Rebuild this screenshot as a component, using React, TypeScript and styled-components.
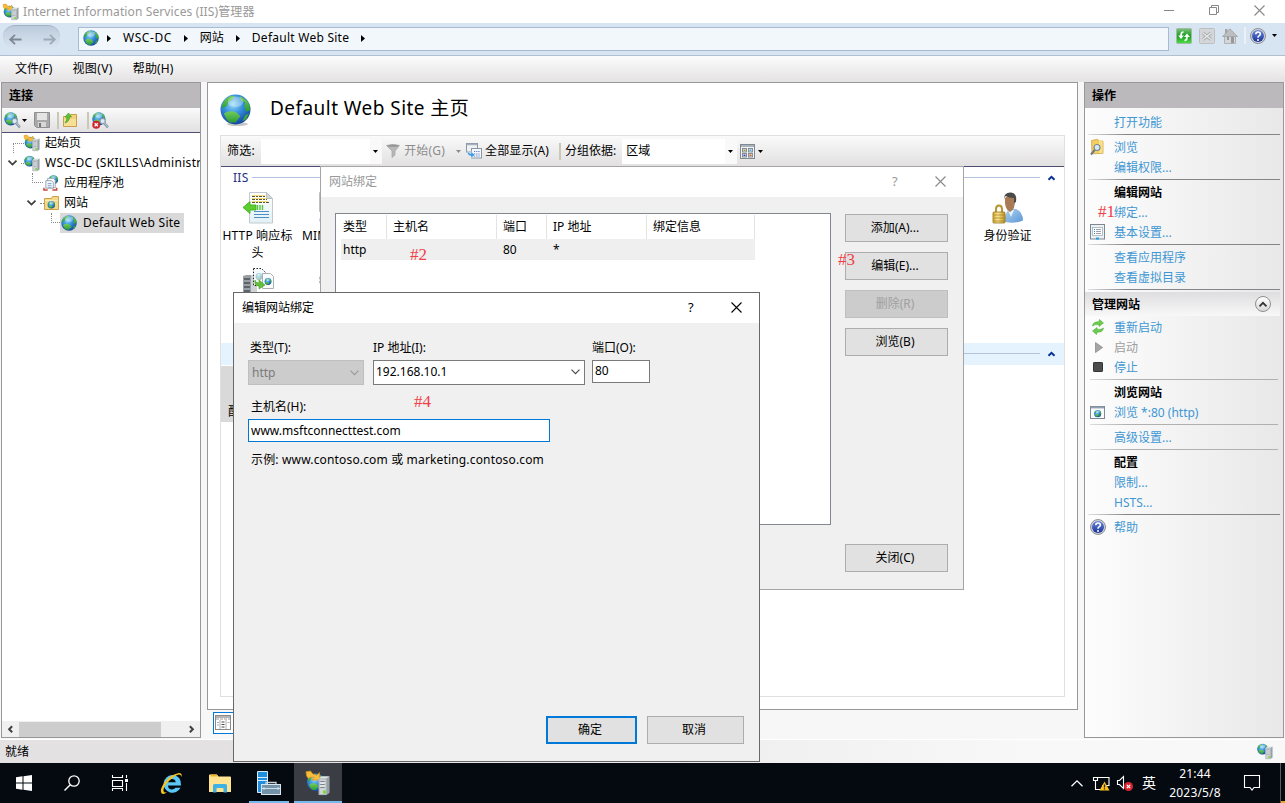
import React from 'react';
import styled, { createGlobalStyle, css } from 'styled-components';

const GlobalStyle = createGlobalStyle`
  * { box-sizing: border-box; }
  body { margin: 0; overflow: hidden; background: #000; }
  svg { display: block; flex: none; }
`;

/* ---------- icons ---------- */

const Svg = styled.svg.attrs<{ $w: number; $h?: number }>(p => ({ width: p.$w, height: p.$h ?? p.$w }))<{ $w: number; $h?: number }>`
  overflow: visible;
`;

const GlobeArt = () => (
  <>
    <circle cx="16" cy="16" r="15.500" fill="url(#sea)" />
    <path d="M2 12 Q4 5 11 2 L15 2 L13 6 L9 8 L7 12 L3 15Z" fill="url(#land)" />
    <path d="M20 2 Q28 5 30.500 11 L31 17 L27 18 L25 13 L26 9 L22 7Z" fill="url(#land)" />
    <path d="M4 20 Q10 16 17 19 L21 23 L16 29.500 L10 29.500 Q6 26 4 20Z" fill="url(#land)" />
    <path d="M26 22 L30 20 L27 26 L23 28Z" fill="#3da83a" />
    <ellipse cx="16" cy="8" rx="8" ry="5.500" fill="#fff" opacity=".3" />
  </>
);

const Globe = ({ s = 16 }: { s?: number }) => (
  <Svg $w={s} viewBox="0 0 32 32">
    {s > 20 && <ellipse cx="18" cy="31" rx="11" ry="2" fill="#000" opacity=".22" />}
    <GlobeArt />
  </Svg>
);

const TowerArt = () => (
  <>
    <path d="M17 10 L21 7 L31 7 L31 29 L27 32 L17 32Z" fill="#e2e5e7" />
    <path d="M27 10 L31 7 L31 29 L27 32Z" fill="#98a0a5" />
    <path d="M17.500 10.500h9.500v21h-9.500z" fill="#d0d4d7" stroke="#9ba2a7" strokeWidth="1" />
    <path d="M19 14h6M19 18h6M19 22h6" stroke="#7a838a" strokeWidth="1.500" />
    <path d="M19 16h6M19 20h6" stroke="#f4f6f7" strokeWidth="1.500" />
    <circle cx="24.500" cy="28" r="2.200" fill="#72dc34" />
  </>
);

const SiteServer = ({ s = 16, arrow = false }: { s?: number; arrow?: boolean }) => (
  <Svg $w={s} viewBox="0 0 32 32">
    <g transform={arrow ? 'translate(1 3) scale(.76)' : 'translate(0 1) scale(.7)'}>
      <GlobeArt />
    </g>
    {arrow && <path d="M0 1 L6 0 L9 4 Q12 4 14 6 L18 2 L18 12 L8 12 L11 8.500 Q6 7 3 10 Q0 7 0 1Z" fill="#f9bd3c" stroke="#d18c17" />}
    <TowerArt />
  </Svg>
);

const Magnifier = () => (
  <>
    <circle cx="20" cy="17" r="5" fill="#d9ebf6" stroke="#8199ac" strokeWidth="2" />
    <path d="M23 21L30 29" stroke="#7e93a4" strokeWidth="4.500" />
    <path d="M23 20.500L29.500 28" stroke="#cbdbe6" strokeWidth="1.600" />
  </>
);

const ConnectIcon = ({ error = false }: { error?: boolean }) => (
  <Svg $w={17} viewBox="0 0 32 32">
    <g transform="scale(.8)">
      <GlobeArt />
    </g>
    <Magnifier />
    {error && (
      <>
        <circle cx="8" cy="24" r="7.500" fill="#d3242c" />
        <path d="M5 21l6 6M11 21l-6 6" stroke="#fff" strokeWidth="2.500" />
      </>
    )}
  </Svg>
);

const FloppyIcon = () => (
  <Svg $w={16} viewBox="0 0 16 16">
    <path d="M.500 .500h15v15h-13l-2-2z" fill="#a9a9a9" stroke="#8f8f8f" />
    <rect x="3" y="1" width="10" height="7" fill="#e4e4e4" />
    <rect x="4" y="10" width="8" height="5" fill="#d7d7d7" />
    <rect x="5" y="11" width="2" height="4" fill="#777" />
  </Svg>
);

const FolderUpIcon = () => (
  <Svg $w={16} viewBox="0 0 16 16">
    <path d="M1.500 4.500h6l1-2h6v12h-13z" fill="#f2d276" stroke="#c9a048" />
    <path d="M2 7h12v7H2z" fill="#f8df98" />
    <path d="M3 11 Q7.500 9.500 7.500 5 L9.500 5 L6.500 1 L3 5 L5 5 Q5 8.500 3 11Z" fill="#5cc43c" stroke="#3c951f" strokeWidth=".6" />
  </Svg>
);

const AppPoolIcon = () => (
  <Svg $w={16} viewBox="0 0 17 17">
    <g transform="translate(6 0) scale(.32)">
      <GlobeArt />
    </g>
    <path d="M5 3.500h6l2 2v8H5z" fill="#fff" stroke="#7d8fa0" strokeWidth=".8" />
    <path d="M3 6h6l2 2v6H3z" fill="#f4f8fb" stroke="#7d8fa0" strokeWidth=".8" />
    <path d="M5 9h4M5 11h4M5 13h4" stroke="#6d8fc0" strokeWidth=".8" />
    <path d="M1 13.500v2.500h4M10 16h4.500v-2.500" fill="none" stroke="#c9483a" strokeWidth="1.600" />
  </Svg>
);

const SitesFolderIcon = () => (
  <Svg $w={15} $h={14} viewBox="0 0 15 14">
    <path d="M.5 2.500h7l1-2h6v13H.5z" fill="#f6d986" stroke="#cba24a" />
    <path d="M1 4.500h13" stroke="#fbeab8" />
    <g transform="translate(3.500 5) scale(.24)">
      <GlobeArt />
    </g>
  </Svg>
);

const FilterIcon = () => (
  <Svg $w={14} viewBox="0 0 14 14">
    <path d="M.5 1.500 Q7 -.5 13.500 1.500 L9 7 L9 11 L6 13.500 L6 7Z" fill="#b8b8b8" stroke="#a2a2a2" strokeWidth=".7" />
    <ellipse cx="7" cy="1.800" rx="5.500" ry="1" fill="#939393" />
  </Svg>
);

const ShowAllIcon = () => (
  <Svg $w={16} viewBox="0 0 16 16">
    <rect x=".5" y=".5" width="11" height="8.500" fill="#eef2f5" stroke="#8a98a6" />
    <path d="M1 1.500h10" stroke="#a5b1bc" strokeWidth="1.500" />
    <rect x="5.500" y="5.500" width="10" height="9.500" fill="#f5f8fb" stroke="#8a98a6" />
    <path d="M8 8.500h6M8 11h6M8 13h6" stroke="#5a78c8" strokeDasharray="1.200 1" />
    <path d="M1.500 6.500Q2 10.500 5 10.500V8.500L9 12L5 15V13Q.5 12.500 1.500 6.500z" fill="#3d9be0" stroke="#fff" strokeWidth=".4" />
  </Svg>
);

const ViewGridIcon = () => (
  <Svg $w={15} viewBox="0 0 15 15">
    <rect x=".5" y=".5" width="14" height="14" fill="#f1f3f5" stroke="#808890" />
    <path d="M1 2h13" stroke="#a9b3bd" strokeWidth="2" />
    <g fill="#dfe4e8" stroke="#7d858c" strokeWidth=".9">
      <rect x="2.500" y="4.500" width="4" height="3.500" />
      <rect x="8.500" y="4.500" width="4" height="3.500" />
      <rect x="2.500" y="9.500" width="4" height="3.500" />
      <rect x="8.500" y="9.500" width="4" height="3.500" />
    </g>
    <path d="M3.500 6.300h2" stroke="#a89a20" strokeWidth="1.500" />
    <path d="M9.500 6.300h2" stroke="#3db1e8" strokeWidth="1.500" />
    <path d="M3.500 11.300h2" stroke="#4040d0" strokeWidth="1.500" />
    <path d="M9.500 11.300h2" stroke="#e05a20" strokeWidth="1.500" />
  </Svg>
);

const HeadersIcon = () => (
  <Svg $w={32} viewBox="0 0 32 32">
    <path d="M7.500 .5h17l6 6v24.500h-23z" fill="url(#page)" stroke="#c2c9cd" />
    <path d="M24.500 .5l6 6h-6z" fill="#d4d8da" stroke="#b9c1c6" />
    <path d="M10 4.500h13M10 7.500h15M10 10.500h17" stroke="#5d5630" strokeWidth="1" strokeDasharray="3 1 2 1" />
    <path d="M10 3.500h13M10 6.500h15M10 9.500h16" stroke="#f5dd78" strokeWidth="1" />
    <path d="M12 19.500h15M12 22.500h15M12 25.500h15" stroke="#4c8fc8" strokeWidth="1.200" />
    <path d="M1 15.500 L8 9.500 V13 H14 V18 H8 V21.500Z" fill="#5ccf2e" stroke="#3aa81c" strokeWidth=".8" />
    <path d="M15.500 13v5M18 13v5M20.500 13v5" stroke="#59c53a" strokeWidth="1.400" />
  </Svg>
);

const MimeIcon = () => (
  <Svg $w={32} viewBox="0 0 32 32">
    <path d="M2.500 .5h17l6 6v13h-23z" fill="#fafafa" stroke="#b9c1c6" />
    <circle cx="6" cy="28" r="3.500" fill="#7d9fd0" />
  </Svg>
);

const RedirectIcon = () => (
  <Svg $w={32} viewBox="0 0 32 32">
    <path d="M1 8 L4 7 L10 7 L10 32 L1 32Z" fill="#9aa1a6" />
    <path d="M9 7h6v25h-6z" fill="#d0d3d5" />
    <path d="M2 11h6M2 15h6M2 19h6M2 23h6" stroke="#4a5258" strokeWidth="1.500" />
    <path d="M11.500 .5h8l4 4v13h-12z" fill="#f5f9fb" stroke="#222" strokeDasharray="1.500 1.500" />
    <g transform="translate(13.500 5) scale(.22)" opacity=".4">
      <GlobeArt />
    </g>
    <path d="M20.500 5.500h8l3 3v12h-11z" fill="#f9fbfc" stroke="#a9b1b6" />
    <g transform="translate(22.500 10) scale(.22)">
      <GlobeArt />
    </g>
    <path d="M13 12 Q13 15 17 15 V12 L23 17 L17 21 V18 Q12 18 13 12Z" fill="#62c03a" stroke="#3f9a20" strokeWidth=".6" />
  </Svg>
);

const GearIcon = () => (
  <Svg $w={32} viewBox="0 0 32 32">
    <circle cx="11" cy="12" r="7" fill="none" stroke="#a3a8ab" strokeWidth="4" strokeDasharray="3 1.500" />
  </Svg>
);

const AuthIcon = () => (
  <Svg $w={32} viewBox="0 0 32 32">
    <path d="M13 30 Q12 19 19 17 L24 17 Q31 20 31 28.500 Q23 32 13 30Z" fill="url(#shirt)" />
    <path d="M16 18 L19 25 L22 18Z" fill="#e8f2fb" />
    <path d="M13 6 Q12 17 18 20 Q23.500 18 23 6 Q18 1 13 6Z" fill="#a87a56" />
    <path d="M12 7 Q12 0 19 .5 Q25.500 1 24 10 L22 11 L22 6 Q17 6 13.500 4Z" fill="#4a4a48" />
    <path d="M4 21 V17 Q4 13.500 7 13.500 Q10 13.500 10 17 V21" fill="none" stroke="#b9962e" strokeWidth="2" />
    <rect x="1" y="20" width="12" height="11" rx="1" fill="url(#gold)" stroke="#94701a" strokeWidth=".8" />
    <path d="M2 23h10M2 26h10M2 29h10" stroke="#a17c1c" strokeWidth=".7" />
  </Svg>
);

const RefreshGreenIcon = () => (
  <Svg $w={16} viewBox="0 0 16 16">
    <rect x=".5" y=".5" width="15" height="15" rx="1" fill="url(#green)" stroke="#a3b8a5" />
    <path d="M7.500 4 Q5 4 5 8" fill="none" stroke="#fff" strokeWidth="1.700" />
    <path d="M2 7.500H8L5 11z" fill="#fff" />
    <path d="M8.500 12.500 Q11 12.500 11 8.500" fill="none" stroke="#fff" strokeWidth="1.700" />
    <path d="M8 9H14L11 5.500z" fill="#fff" />
  </Svg>
);

const StopGreyIcon = () => (
  <Svg $w={16} viewBox="0 0 16 16">
    <rect x=".5" y=".5" width="15" height="15" rx="1" fill="#d4d6d8" stroke="#bcbfc2" />
    <path d="M4 5l8 6.500M12 5l-8 6.500" stroke="#a4a8ac" strokeWidth="3" />
    <path d="M4 5l8 6.500M12 5l-8 6.500" stroke="#e8eaec" strokeWidth="1.400" />
  </Svg>
);

const HomeGreyIcon = () => (
  <Svg $w={16} viewBox="0 0 16 16">
    <path d="M2.500 8h11v7.500h-11z" fill="#d4d6d8" stroke="#a5a7a9" strokeWidth=".8" />
    <path d="M.5 8.500L8 .8l7.500 7.700z" fill="#bcbfc1" stroke="#a0a2a4" strokeWidth=".8" />
    <path d="M3 1h2.500v3L3 6z" fill="#a5a5a5" />
    <rect x="5" y="9" width="2" height="3" fill="#999" />
    <rect x="9" y="9" width="3" height="6" fill="#96989a" />
  </Svg>
);

const HelpIcon = () => (
  <Svg $w={16} viewBox="0 0 16 16">
    <circle cx="8" cy="8" r="7.500" fill="#cfd1d6" stroke="#85888e" strokeWidth=".9" />
    <circle cx="8" cy="8" r="6" fill="url(#help)" />
    <path d="M5.800 6.300 Q5.800 4 8 4 Q10.300 4 10.300 6 Q10.300 7.200 9 7.900 Q8 8.500 8 9.800" fill="none" stroke="#fff" strokeWidth="1.600" />
    <circle cx="8" cy="12" r="1" fill="#fff" />
  </Svg>
);

const ExploreIcon = () => (
  <Svg $w={15} $h={16} viewBox="0 0 15 16">
    <path d="M1.500 1.500l6-1.200 1 1.500 4.500 .5v12l-11 .5z" fill="#f3cf62" stroke="#d0a644" strokeWidth=".8" />
    <path d="M9 1h3.500v13H9z" fill="#f9e18c" />
    <circle cx="7" cy="8.500" r="3" fill="#d5ebf7" stroke="#7c8790" strokeWidth="1.200" />
    <path d="M4.800 10.800L1 15.500" stroke="#6a7a86" strokeWidth="2" />
  </Svg>
);

const SettingsPageIcon = () => (
  <Svg $w={15} $h={16} viewBox="0 0 15 16">
    <rect x=".5" y=".5" width="14" height="14.500" fill="#eef1f3" stroke="#7e8890" />
    <rect x="2.500" y="3.500" width="10" height="8" fill="#fff" stroke="#a4b0ba" strokeWidth=".8" />
    <path d="M4 5.500h1M4 7.500h1M4 9.500h1" stroke="#3d7ec0" />
    <path d="M6 5.500h5M6 7.500h5M6 9.500h5" stroke="#808c98" strokeWidth=".8" />
    <path d="M6 14.500h3" stroke="#1aa3e8" strokeWidth="2" />
  </Svg>
);

const RestartIcon = () => (
  <Svg $w={14} $h={16} viewBox="0 0 14 16">
    <path d="M1.500 7 Q2 2.500 8 2.800 L8.500 .5 L12.500 4 L8 7.500 V5.800 Q4 5 1.500 7Z" fill="#6ccb4e" stroke="#43a32a" strokeWidth=".5" />
    <path d="M12.500 9 Q12 13.500 6 13.200 L5.500 15.500 L1.500 12 L6 8.500 V10.200 Q10 11 12.500 9Z" fill="#6ccb4e" stroke="#43a32a" strokeWidth=".5" />
  </Svg>
);

const StartIcon = () => (
  <Svg $w={8} $h={11} viewBox="0 0 8 11">
    <path d="M.5 .5L7.500 5.500L.5 10.500z" fill="#a5a5a5" stroke="#8d8d8d" strokeWidth=".8" />
  </Svg>
);

const StopIcon = () => (
  <Svg $w={10} viewBox="0 0 10 10">
    <rect x=".5" y=".5" width="9" height="9" rx=".6" fill="#4d4d4d" stroke="#333" />
  </Svg>
);

const BrowserIcon = () => (
  <Svg $w={15} $h={13} viewBox="0 0 15 13">
    <rect x=".5" y=".5" width="14" height="12" fill="#fbfcfd" stroke="#7e8a95" />
    <path d="M1 1.500h13" stroke="#8fa0b0" strokeWidth="1.800" />
    <g transform="translate(4 4) scale(.23)">
      <GlobeArt />
    </g>
  </Svg>
);

const FeaturesViewIcon = () => (
  <Svg $w={16} $h={15} viewBox="0 0 16 15">
    <rect x=".5" y=".5" width="15" height="14" fill="#fff" stroke="#8a8a8a" />
    <path d="M1 2h14" stroke="#b5b5b5" strokeWidth="2" />
    <path d="M1 4h14" stroke="#999" strokeDasharray="3 1" />
    <path d="M5 5v9M11 5v9" stroke="#999" strokeWidth=".8" />
    <path d="M6.500 7h3M6.500 9.500h3M6.500 12h3" stroke="#444" />
    <path d="M2 7.500h2M2 10h2M12.500 7.500h2" stroke="#9fb0c0" />
  </Svg>
);

const SmallCaret = ({ c = '#000' }: { c?: string }) => (
  <Svg $w={5} $h={3} viewBox="0 0 5 3">
    <path d="M0 0h5L2.500 3z" fill={c} />
  </Svg>
);
const RightCaret = () => (
  <Svg $w={4} $h={7} viewBox="0 0 4 7">
    <path d="M0 0L4 3.500L0 7z" fill="#000" />
  </Svg>
);
const Chevron = ({ w = 8, c = '#404040', sw = 1.8, up = false }: { w?: number; c?: string; sw?: number; up?: boolean }) => (
  <Svg $w={w} $h={w / 2 + 1} viewBox={`0 0 ${w} ${w / 2 + 1}`}>
    <path d={up ? `M.5 ${w / 2 + 0.3}L${w / 2} .8L${w - 0.5} ${w / 2 + 0.3}` : `M.5 .6L${w / 2} ${w / 2 + 0.1}L${w - 0.5} .6`} fill="none" stroke={c} strokeWidth={sw} />
  </Svg>
);
const CloseGlyph = ({ c }: { c: string }) => (
  <Svg $w={11} viewBox="0 0 11 11">
    <path d="M.5 .5l10 10M10.500 .5l-10 10" stroke={c} strokeWidth="1.100" />
  </Svg>
);

const Defs = () => (
  <HiddenSvg aria-hidden>
    <defs>
      <radialGradient id="sea" cx=".42" cy=".32" r=".72">
        <stop offset="0" stopColor="#9adcf8" />
        <stop offset=".45" stopColor="#3590dd" />
        <stop offset="1" stopColor="#123d9c" />
      </radialGradient>
      <linearGradient id="land" x1="0" y1="0" x2="0" y2="1">
        <stop offset="0" stopColor="#74cc5e" />
        <stop offset="1" stopColor="#2a9c34" />
      </linearGradient>
      <linearGradient id="page" x1="0" y1="0" x2="0" y2="1">
        <stop offset="0" stopColor="#fff" />
        <stop offset="1" stopColor="#e2f1f6" />
      </linearGradient>
      <linearGradient id="shirt" x1="0" y1="0" x2="1" y2="1">
        <stop offset="0" stopColor="#aad2f2" />
        <stop offset="1" stopColor="#5e97d4" />
      </linearGradient>
      <linearGradient id="gold">
        <stop offset="0" stopColor="#d6a92d" />
        <stop offset=".4" stopColor="#fbe897" />
        <stop offset="1" stopColor="#c1921d" />
      </linearGradient>
      <linearGradient id="green" x1="0" y1="0" x2="0" y2="1">
        <stop offset="0" stopColor="#7cc47c" />
        <stop offset=".5" stopColor="#169c1c" />
        <stop offset="1" stopColor="#4fe048" />
      </linearGradient>
      <linearGradient id="help" x1="0" y1="0" x2="0" y2="1">
        <stop offset="0" stopColor="#6a8ade" />
        <stop offset="1" stopColor="#183198" />
      </linearGradient>
    </defs>
  </HiddenSvg>
);

const HiddenSvg = styled.svg`
  position: absolute;
  width: 0;
  height: 0;
`;

/* ---------- frame ---------- */

const Screen = styled.div`
  position: relative;
  width: 1285px;
  height: 803px;
  display: flex;
  flex-direction: column;
  overflow: hidden;
  background: #f7f7f7;
  color: #000;
  font: 12px/20px 'Noto Sans', 'Noto Sans CJK SC', sans-serif;
  white-space: nowrap;
`;

const Txt = styled.span<{ $ls?: number; $c?: string }>`
  display: block;
  letter-spacing: ${p => p.$ls ?? 0}px;
  color: ${p => p.$c ?? 'inherit'};
`;

const TitleBar = styled.header`
  height: 23px;
  flex: none;
  display: flex;
  align-items: center;
  padding: 0 20px 0 3px;
  background: #fff;
  color: #999;
`;
const TitleText = styled(Txt)`
  flex: 1;
  margin-left: 4px;
`;
const WindowButtons = styled.div`
  display: flex;
  align-items: center;
  gap: 35px;
  margin-top: -3px;
`;

const AddressBar = styled.div`
  height: 33px;
  flex: none;
  display: flex;
  align-items: flex-start;
  padding: 4px 8px 0 3px;
  background: #d7e4f2;
  border-bottom: 1px solid #b1bfd0;
`;
const NavPill = styled.div`
  width: 57px;
  height: 25px;
  flex: none;
  margin: -2px 18px 0 0;
  display: flex;
  align-items: center;
  justify-content: space-between;
  padding: 3px 4px 0 6px;
  border-radius: 12px;
  background: linear-gradient(#bccbdc, #dae6f2);
  border-top: 1px solid #a4b1c0;
`;
const AddressField = styled.div`
  width: 1091px;
  height: 24px;
  flex: none;
  display: flex;
  align-items: center;
  padding: 0 0 2px 4px;
  background: #f2f7fc;
  border: 1px solid #a9bbd2;
`;
const Crumb = styled(Txt)`
  margin: 0 12px;
`;
const AddressTools = styled.div`
  display: flex;
  align-items: center;
  height: 17px;
  margin-left: 7px;
  gap: 7px;
  & > :nth-child(4) {
    margin: 0 -3px 0 -1px;
  }
  & > :last-child {
    margin-left: -1px;
  }
`;
const ToolDivider = styled.i<{ $c?: string }>`
  width: 2px;
  height: 17px;
  background: ${p => p.$c ?? '#c9c8b4'};
`;

const MenuBar = styled.nav`
  height: 26px;
  flex: none;
  display: flex;
  align-items: center;
  gap: 20px;
  padding-left: 15px;
  background: linear-gradient(#fcfcfc, #e4e2e3);
`;

const Workspace = styled.main`
  height: 657px;
  flex: none;
  display: flex;
  align-items: flex-start;
  padding: 0 0 0 1px;
`;

const panel = css`
  border: 1px solid #989799;
  background: #fff;
  display: flex;
  flex-direction: column;
`;
const PanelTitle = styled.h2`
  margin: 0;
  height: 25px;
  flex: none;
  padding-left: 7px;
  background: #bbb9bc;
  font: bold 12px/24px 'Noto Sans CJK SC', sans-serif;
`;

/* ---------- connections ---------- */

const ConnectionsPanel = styled.aside`
  ${panel}
  width: 200px;
  height: 656px;
  overflow: hidden;
`;
const ConnectionsTools = styled.div`
  height: 25px;
  flex: none;
  display: flex;
  align-items: center;
  padding-left: 2px;
  background: linear-gradient(#fafafa, #e2e0e1);
  border-bottom: 1px solid #4e4e74;
`;
const Gap = styled.i<{ $w: number }>`
  width: ${p => p.$w}px;
  flex: none;
`;
const Tree = styled.div`
  flex: 1;
  overflow: hidden;
`;
const TreeRow = styled.div<{ $indent: number }>`
  height: 20px;
  display: flex;
  align-items: center;
  padding-left: ${p => p.$indent}px;
`;
const Elbow = styled.i<{ $w: number; $h: number }>`
  width: ${p => p.$w}px;
  height: ${p => p.$h}px;
  flex: none;
  align-self: ${p => (p.$h > 1 ? 'flex-end' : 'center')};
  border: 0 dotted #8a8a8a;
  border-left-width: ${p => (p.$h > 1 ? 1 : 0)}px;
  border-top-width: 1px;
`;
const CornerElbow = styled.i<{ $w: number }>`
  width: ${p => p.$w}px;
  height: 10px;
  flex: none;
  align-self: flex-start;
  border: 0 dotted #8a8a8a;
  border-left-width: 1px;
  border-bottom-width: 1px;
`;
const TreeLabel = styled(Txt)`
  padding-left: 5px;
`;
const SelectedNode = styled.div`
  height: 20px;
  width: 124px;
  display: flex;
  align-items: center;
  padding-left: 1px;
  background: #d9d9d9;
`;
const HScroll = styled.div`
  height: 16px;
  flex: none;
  display: flex;
  align-items: center;
  padding: 0 5px;
  background: #f0f0f0;
`;
const Thumb = styled.i`
  width: 142px;
  height: 15px;
  margin: 0 27px 0 5px;
  background: #cdcdcd;
`;
const Turn = styled.span<{ $deg: number }>`
  transform: rotate(${p => p.$deg}deg);
`;

/* ---------- center ---------- */

const CenterPanel = styled.section`
  ${panel}
  width: 871px;
  height: 628px;
  padding: 11px 12px 12px;
`;
const CenterColumn = styled.div`
  width: 871px;
  margin: 0 6px;
`;
const PageHead = styled.div`
  height: 41px;
  flex: none;
  display: flex;
  align-items: flex-start;
  h1 {
    margin: 1px 0 0 19px;
    font: 19px/26px 'Noto Sans', 'Noto Sans CJK SC', sans-serif;
    letter-spacing: 0.45px;
  }
`;
const FeatureBox = styled.div`
  width: 845px;
  flex: 1;
  border: 1px solid #e0e0e0;
`;
const FilterBar = styled.div`
  height: 31px;
  display: flex;
  align-items: center;
  padding-left: 6px;
  background: linear-gradient(#fafafa, #e2e0e1);
  border-bottom: 1px solid #4e4e74;
`;
const Combo = styled.div<{ $w: number }>`
  width: ${p => p.$w}px;
  height: 25px;
  display: flex;
  align-items: center;
  justify-content: space-between;
  padding: 0 4px;
  background: linear-gradient(90deg, #fff calc(100% - 12px), #f9f9f9 0);
`;
const GroupHead = styled.div<{ $hot?: boolean }>`
  height: 22px;
  display: flex;
  align-items: center;
  gap: 3px;
  padding: 0 9px 0 12px;
  color: #1f2f84;
  background: ${p => (p.$hot ? '#e5f3ff' : 'transparent')};
`;
const GroupLine = styled.i`
  flex: 1;
  height: 1px;
  margin: -1px 5px 0 0;
  background: #b3c3de;
`;
const FeatureGrid = styled.div`
  display: grid;
  grid-template-columns: repeat(11, 75px);
  grid-auto-rows: 76px;
  padding-top: 3px;
  margin-left: -1px;
  height: 154px;
  overflow: hidden;
`;
const Feature = styled.div<{ $col: number }>`
  grid-column: ${p => p.$col};
  display: flex;
  flex-direction: column;
  align-items: center;
  gap: 3px;
  line-height: 17px;
  text-align: center;
`;
const ManagementItem = styled.div`
  width: 75px;
  height: 56px;
  margin-top: 1px;
  padding: 36px 0 0 7px;
  background: #d9d9d9;
`;
const ViewTabs = styled.div`
  padding: 2px 0 0 6px;
`;
const ViewTab = styled.div`
  width: 82px;
  height: 22px;
  padding: 2px 1px;
  border: 1px solid #0078d7;
  background: #fff;
`;

/* ---------- actions ---------- */

const ActionsPanel = styled.aside`
  ${panel}
  width: 200px;
  height: 656px;
  background: linear-gradient(90deg, #fdfdfd, #e9e8e9);
`;
const ActionList = styled.div`
  padding-top: 4px;
`;
const ActionRow = styled.div<{ $kind?: 'head' | 'off' }>`
  height: 20px;
  display: grid;
  grid-template: 20px / 24px 1fr;
  align-items: center;
  padding-left: 5px;
  color: ${p => (p.$kind === 'head' ? '#000' : p.$kind === 'off' ? '#9d9d9d' : '#3f97d3')};
  font-weight: ${p => (p.$kind === 'head' ? 700 : 400)};
  & > :last-child {
    padding-top: 2px;
  }
`;
const IconSlot = styled.span<{ $pad?: number }>`
  padding-left: ${p => p.$pad ?? 0}px;
`;
const ActionRule = styled.hr<{ $soft?: boolean }>`
  height: 1px;
  margin: 2px ${p => (p.$soft ? 5 : 3)}px 2px ${p => (p.$soft ? 5 : 3)}px;
  border: 0;
  background: ${p => (p.$soft ? 'linear-gradient(90deg,#ddd,#b0b0b0 20%)' : 'linear-gradient(90deg,#e0e0e0,#858585 20%)')};
`;
const ActionSection = styled.div`
  height: 24px;
  display: flex;
  align-items: center;
  justify-content: space-between;
  margin: 0 3px 1px 0;
  padding: 1px 9px 0 7px;
  font-weight: 700;
  background: linear-gradient(#dedddf, #f8f8f8);
`;
const CollapseButton = styled.span`
  width: 16px;
  height: 16px;
  margin-top: -1px;
  display: grid;
  place-items: center;
  border: 1px solid #8f8f8f;
  border-radius: 50%;
  background: linear-gradient(#fff, #d8d8d8);
`;

const StatusBar = styled.footer`
  height: 24px;
  flex: none;
  display: flex;
  align-items: center;
  justify-content: space-between;
  padding: 0 12px 0 5px;
  border-top: 1px solid #fff;
  background: linear-gradient(90deg, #e3e1e2 20%, #f8f8f8 80%);
  svg {
    margin-top: -2px;
  }
`;

/* ---------- dialogs ---------- */

const Dialog = styled.section<{ $x: number; $y: number; $w: number; $h: number; $edge: string }>`
  position: absolute;
  left: ${p => p.$x}px;
  top: ${p => p.$y}px;
  width: ${p => p.$w}px;
  height: ${p => p.$h}px;
  display: flex;
  flex-direction: column;
  border: 1px solid ${p => p.$edge};
  background: #f0f0f0;
`;
const DialogTitle = styled.header<{ $dim?: boolean }>`
  height: 30px;
  flex: none;
  display: flex;
  align-items: center;
  padding: 0 17px 1px 8px;
  background: #fff;
  color: ${p => (p.$dim ? '#999' : '#000')};
  & > :first-child {
    flex: 1;
    padding-top: 1px;
  }
`;
const HelpMark = styled.span`
  width: 8px;
  margin: -1px 35px 0 0;
  font-size: 13px;
`;
const Push = styled.button<{ $w?: number; $state?: 'default' | 'off' }>`
  width: ${p => p.$w ?? 103}px;
  height: 28px;
  padding: 0 3px 0 0;
  border: ${p => (p.$state === 'default' ? '2px solid #0078d7' : p.$state === 'off' ? '1px solid #bfbfbf' : '1px solid #adadad')};
  background: ${p => (p.$state === 'off' ? '#ccc' : '#e1e1e1')};
  color: ${p => (p.$state === 'off' ? '#9f9f9f' : '#000')};
  font: inherit;
`;
const BindingsBody = styled.div`
  flex: 1;
  display: flex;
  gap: 14px;
  padding: 16px 15px 0 14px;
`;
const BindingsList = styled.div`
  width: 496px;
  height: 312px;
  padding: 1px 0 0 5px;
  border: 1px solid #828790;
  background: #fff;
`;
const BindingsRow = styled.div<{ $head?: boolean }>`
  width: 414px;
  height: ${p => (p.$head ? 24 : 21)}px;
  display: grid;
  grid-template-columns: 46px 110px 50px 100px 108px;
  line-height: ${p => (p.$head ? 23 : 22)}px;
  background: ${p => (p.$head ? '#fff' : '#efefef')};
  span {
    padding-left: 6px;
    border-right: 1px solid ${p => (p.$head ? '#e3e3e3' : 'transparent')};
  }
  span:first-child {
    padding-left: 2px;
  }
`;
const ButtonStack = styled.div`
  height: 358px;
  display: flex;
  flex-direction: column;
  gap: 10px;
  margin-top: 1px;
  & > :last-child {
    margin-top: auto;
  }
`;

const EditBody = styled.div`
  flex: 1;
  display: flex;
  flex-direction: column;
  padding: 15px 15px 17px 14px;
`;
const FieldRow = styled.div`
  display: flex;
  align-items: flex-start;
`;
const Field = styled.label<{ $w: number; $gap?: number }>`
  display: block;
  width: ${p => p.$w}px;
  margin-right: ${p => p.$gap ?? 0}px;
`;
const FieldLabel = styled.div<{ $pad?: number }>`
  height: 22px;
  padding-left: ${p => p.$pad ?? 2}px;
`;
const Box = styled.div<{ $h: number; $c: string; $off?: boolean; $low?: boolean }>`
  height: ${p => p.$h}px;
  display: flex;
  align-items: center;
  justify-content: space-between;
  padding: ${p => (p.$low ? '1px 4px 0 3px' : '0 4px 1px 2px')};
  border: 1px solid ${p => p.$c};
  background: ${p => (p.$off ? '#ccc' : '#fff')};
  color: ${p => (p.$off ? '#7b7b7b' : '#000')};
`;
const HostBox = styled(Box)`
  padding: 1px 4px 0 2px;
`;
const HostRow = styled.div`
  margin-top: 12px;
`;
const Example = styled(Txt)`
  padding: 8px 0 0 3px;
`;
const DialogActions = styled.div`
  display: flex;
  justify-content: flex-end;
  gap: 10px;
  margin-top: auto;
`;

const Note = styled.b<{ $x: number; $y: number }>`
  position: absolute;
  left: ${p => p.$x}px;
  top: ${p => p.$y}px;
  color: #ef4048;
  font: 17px/18px 'Liberation Serif', serif;
`;

/* ---------- taskbar ---------- */

const Taskbar = styled.footer`
  height: 40px;
  flex: none;
  display: flex;
  align-items: stretch;
  background: #050a11;
  color: #fff;
`;
const Task = styled.div<{ $w: number; $open?: boolean; $active?: boolean; $mr?: number }>`
  width: ${p => p.$w}px;
  margin-right: ${p => p.$mr ?? 0}px;
  display: grid;
  place-items: center;
  padding-top: ${p => (p.$open ? 2 : 0)}px;
  background: ${p => (p.$active ? '#3a3e44' : 'transparent')};
  border-bottom: ${p => (p.$open ? 2 : 0)}px solid #76b9ed;
`;
const Tray = styled.div`
  margin-left: auto;
  display: flex;
  align-items: center;
`;
const Clock = styled.div`
  width: 54px;
  margin: 0 22px 0 12px;
  line-height: 19px;
  text-align: center;
  letter-spacing: 0.15px;
`;
const Ime = styled.span`
  font-size: 14px;
  margin-left: 8px;
`;
const DesktopEdge = styled.i`
  width: 5px;
  height: 40px;
  margin-left: 20px;
  border-left: 1px solid #5b5e62;
  background: linear-gradient(#050a11 38px, #f2a02c 38px);
`;

type ActionItem = { t: string; icon?: React.ReactNode; pad?: number; kind?: 'head' | 'off' };
const siteActions: (ActionItem | 'rule')[] = [
  { t: '打开功能' },
  'rule',
  { t: '浏览', icon: <ExploreIcon /> },
  { t: '编辑权限...' },
  'rule',
  { t: '编辑网站', kind: 'head' },
  { t: '绑定...' },
  { t: '基本设置...', icon: <SettingsPageIcon /> },
  'rule',
  { t: '查看应用程序' },
  { t: '查看虚拟目录' },
  'rule',
];
const manageActions: (ActionItem | 'rule' | 'soft')[] = [
  { t: '重新启动', icon: <RestartIcon />, pad: 1 },
  { t: '启动', icon: <StartIcon />, pad: 5, kind: 'off' },
  { t: '停止', icon: <StopIcon />, pad: 3 },
  'soft',
  { t: '浏览网站', kind: 'head' },
  { t: '浏览 *:80 (http)', icon: <BrowserIcon /> },
  'soft',
  { t: '高级设置...' },
  'soft',
  { t: '配置', kind: 'head' },
  { t: '限制...' },
  { t: 'HSTS...' },
  'rule',
  { t: '帮助', icon: <HelpIcon /> },
];

const Actions = ({ items }: { items: (ActionItem | 'rule' | 'soft')[] }) => (
  <>
    {items.map((it, i) =>
      typeof it === 'string' ? (
        <ActionRule key={i} $soft={it === 'soft'} />
      ) : (
        <ActionRow key={i} $kind={it.kind}>
          <IconSlot $pad={it.pad}>{it.icon}</IconSlot>
          <Txt>{it.t}</Txt>
        </ActionRow>
      ),
    )}
  </>
);

export default function App() {
  return (
    <>
      <GlobalStyle />
      <Screen>
        <Defs />
        <TitleBar>
          <SiteServer arrow />
          <TitleText $ls={0.12}>Internet Information Services (IIS)管理器</TitleText>
          <WindowButtons>
            <Svg $w={10} $h={11} viewBox="0 0 10 11">
              <path d="M0 5.500h10" stroke="#888" />
            </Svg>
            <Svg $w={10} viewBox="0 0 10 10">
              <path d="M.5 2.500h7v7h-7zM2.500 2.500v-2h7v7h-2" fill="none" stroke="#888" />
            </Svg>
            <CloseGlyph c="#888" />
          </WindowButtons>
        </TitleBar>

        <AddressBar>
          <NavPill>
            <Svg $w={13} $h={11} viewBox="0 0 13 11">
              <path d="M6 .8L1.200 5.500L6 10.200M1.500 5.500H12.500" fill="none" stroke="#7f8993" strokeWidth="1.800" />
            </Svg>
            <Svg $w={13} $h={11} viewBox="0 0 13 11">
              <path d="M7 .8L11.800 5.500L7 10.200M11.500 5.500H.5" fill="none" stroke="#9daab7" strokeWidth="1.800" />
            </Svg>
          </NavPill>
          <AddressField>
            <Globe />
            <Gap $w={8} />
            <RightCaret />
            <Crumb $ls={0.55}>WSC-DC</Crumb>
            <RightCaret />
            <Crumb>网站</Crumb>
            <RightCaret />
            <Crumb $ls={0.25}>Default Web Site</Crumb>
            <RightCaret />
          </AddressField>
          <AddressTools>
            <RefreshGreenIcon />
            <StopGreyIcon />
            <HomeGreyIcon />
            <ToolDivider $c="#edf1f5" />
            <HelpIcon />
            <SmallCaret />
          </AddressTools>
        </AddressBar>

        <MenuBar>
          <Txt>文件(F)</Txt>
          <Txt $ls={0.4}>视图(V)</Txt>
          <Txt $ls={0.1}>帮助(H)</Txt>
        </MenuBar>

        <Workspace>
          <ConnectionsPanel>
            <PanelTitle>连接</PanelTitle>
            <ConnectionsTools>
              <ConnectIcon />
              <Gap $w={1} />
              <SmallCaret />
              <Gap $w={7} />
              <FloppyIcon />
              <Gap $w={7} />
              <ToolDivider />
              <Gap $w={3} />
              <FolderUpIcon />
              <Gap $w={9} />
              <ToolDivider />
              <Gap $w={3} />
              <ConnectIcon error />
            </ConnectionsTools>
            <Tree>
              <TreeRow $indent={11}>
                <Elbow $w={11} $h={10} />
                <SiteServer arrow />
                <TreeLabel>起始页</TreeLabel>
              </TreeRow>
              <TreeRow $indent={6}>
                <Chevron w={9} />
                <Gap $w={4} />
                <Elbow $w={3} $h={1} />
                <SiteServer />
                <TreeLabel $ls={0.32}>WSC-DC (SKILLS\Administrator)</TreeLabel>
              </TreeRow>
              <TreeRow $indent={30}>
                <CornerElbow $w={11} />
                <AppPoolIcon />
                <TreeLabel>应用程序池</TreeLabel>
              </TreeRow>
              <TreeRow $indent={25}>
                <Chevron w={9} />
                <Gap $w={4} />
                <Elbow $w={4} $h={1} />
                <SitesFolderIcon />
                <TreeLabel>网站</TreeLabel>
              </TreeRow>
              <TreeRow $indent={49}>
                <CornerElbow $w={9} />
                <SelectedNode>
                  <Globe />
                  <Gap $w={1} />
                  <TreeLabel $ls={0.25}>Default Web Site</TreeLabel>
                </SelectedNode>
              </TreeRow>
            </Tree>
            <HScroll>
              <Turn $deg={90}>
                <Chevron w={7} sw={2} />
              </Turn>
              <Thumb />
              <Turn $deg={-90}>
                <Chevron w={7} sw={2} />
              </Turn>
            </HScroll>
          </ConnectionsPanel>

          <CenterColumn>
            <CenterPanel>
              <PageHead>
                <Globe s={31} />
                <h1>Default Web Site 主页</h1>
              </PageHead>
              <FeatureBox>
                <FilterBar>
                  <Txt $ls={0.3}>筛选:</Txt>
                  <Gap $w={6} />
                  <Combo $w={121}>
                    <span />
                    <SmallCaret />
                  </Combo>
                  <Gap $w={4} />
                  <FilterIcon />
                  <Gap $w={4} />
                  <Txt $ls={0.2} $c="#8c8c8c">开始(G)</Txt>
                  <Gap $w={11} />
                  <SmallCaret c="#8c8c8c" />
                  <Gap $w={5} />
                  <ShowAllIcon />
                  <Gap $w={3} />
                  <Txt $ls={0.15}>全部显示(A)</Txt>
                  <Gap $w={10} />
                  <ToolDivider />
                  <Gap $w={4} />
                  <Txt>分组依据:</Txt>
                  <Gap $w={6} />
                  <Combo $w={115}>
                    <Txt>区域</Txt>
                    <SmallCaret />
                  </Combo>
                  <Gap $w={3} />
                  <ViewGridIcon />
                  <Gap $w={3} />
                  <SmallCaret />
                </FilterBar>
                <GroupHead>
                  <Txt $ls={0.3}>IIS</Txt>
                  <GroupLine />
                  <Chevron w={7} c="#0a2f96" sw={2} up />
                </GroupHead>
                <FeatureGrid>
                  <Feature $col={1}>
                    <HeadersIcon />
                    <Txt $ls={0.15}>
                      HTTP 响应标
                      <br />头
                    </Txt>
                  </Feature>
                  <Feature $col={2}>
                    <MimeIcon />
                    <Txt $ls={0.2}>MIME 类型</Txt>
                  </Feature>
                  <Feature $col={11}>
                    <AuthIcon />
                    <Txt>身份验证</Txt>
                  </Feature>
                  <Feature $col={1}>
                    <RedirectIcon />
                  </Feature>
                  <Feature $col={2}>
                    <GearIcon />
                  </Feature>
                </FeatureGrid>
                <GroupHead $hot>
                  <Txt>管理</Txt>
                  <GroupLine />
                  <Chevron w={7} c="#0a2f96" sw={2} up />
                </GroupHead>
                <ManagementItem>配置编辑</ManagementItem>
              </FeatureBox>
            </CenterPanel>
            <ViewTabs>
              <ViewTab>
                <FeaturesViewIcon />
              </ViewTab>
            </ViewTabs>
          </CenterColumn>

          <ActionsPanel>
            <PanelTitle>操作</PanelTitle>
            <ActionList>
              <Actions items={siteActions} />
              <ActionSection>
                管理网站
                <CollapseButton>
                  <Chevron w={8} c="#333" up />
                </CollapseButton>
              </ActionSection>
              <Actions items={manageActions} />
            </ActionList>
          </ActionsPanel>
        </Workspace>

        <StatusBar>
          <Txt>就绪</Txt>
          <SiteServer />
        </StatusBar>

        <Taskbar>
          <Task $w={48}>
            <Svg $w={16} viewBox="0 0 16 16">
              <path d="M0 2.300L6.500 1.300V7.500H0zM7.500 1.200L16 0V7.500H7.500zM0 8.500H6.500V14.700L0 13.700zM7.500 8.500H16V16L7.500 14.800z" fill="#fff" />
            </Svg>
          </Task>
          <Task $w={48}>
            <Svg $w={16} viewBox="0 0 16 16">
              <circle cx="10" cy="6" r="5.200" fill="none" stroke="#fff" strokeWidth="1.300" />
              <path d="M6.300 9.700L.5 15.500" stroke="#fff" strokeWidth="1.400" />
            </Svg>
          </Task>
          <Task $w={48}>
            <Svg $w={16} viewBox="0 0 16 16">
              <path d="M.5 0v2.500h10V0M.5 5.500h10v6H.5zM.5 16v-2.500h10V16M14.500 0v3M14.500 8v8" fill="none" stroke="#fff" strokeWidth="1.100" />
              <rect x="13" y="4" width="3" height="3" fill="#fff" />
            </Svg>
          </Task>
          <Task $w={54}>
            <Svg $w={23} viewBox="0 0 23 23">
              <path d="M12 3 a8.900 8.900 0 1 0 8.500 12.800 h-5 q-1.300 1.700-3.500 1.700 q-3.800 0-4-3.900 H21 Q21.500 3.500 12 3zM8 10.200 Q8.500 7 12 7 Q15.300 7 15.700 10.200z" fill="#5cc8f5" fillRule="evenodd" />
              <path d="M21.500 5 Q22.500 .5 18 1.200 Q10 3 4 11 Q-.5 18 1.300 21 Q3 23 7 20.500 Q4 21 3.500 19 Q3 15.500 8 10 Q14 3.500 19 2.500 Q21 2.300 21.500 5z" fill="#f5c223" />
            </Svg>
          </Task>
          <Task $w={44} $mr={7}>
            <Svg $w={22} $h={19} viewBox="0 0 22 19">
              <path d="M0 1.500Q0 .5 1 .5H8L9.500 2.500H21Q22 2.500 22 3.500V18H0z" fill="#ffe391" />
              <path d="M1.500 .5h6l1 2h-7z" fill="#f0b429" />
              <path d="M4 18.500V11.500Q4 10 5.500 10h11Q18 10 18 11.500V18.500H14.500V15Q14.500 14 13.500 14H8.500Q7.500 14 7.500 15V18.500z" fill="#3eb2e6" />
            </Svg>
          </Task>
          <Task $w={40} $open $mr={5}>
            <Svg $w={24} viewBox="0 0 24 24">
              <path d="M.5 .5h10v21H.5z" fill="#1f8fdd" stroke="#d7ecfa" />
              <path d="M1 6.500h9M1 9.500h9" stroke="#d7ecfa" />
              <path d="M9 14V11.500h10V14" fill="none" stroke="#c6d3dc" strokeWidth="1.300" />
              <rect x="4.500" y="13.500" width="19" height="10" fill="#7493a8" stroke="#dbe5ec" />
              <path d="M5 17.500h18M7 16v3M21 16v3" stroke="#dbe5ec" strokeWidth=".9" />
            </Svg>
          </Task>
          <Task $w={48} $open $active>
            <SiteServer s={24} arrow />
          </Task>
          <Tray>
            <Chevron w={12} c="#fff" sw={1.3} up />
            <Gap $w={10} />
            <Svg $w={17} viewBox="0 0 17 17">
              <path d="M4 2.500h12v8h-7M.5 2.500h4v3h-4zM2.500 5.500v9h6" fill="none" stroke="#fff" strokeWidth="1.100" />
              <path d="M11.500 6.500L16.500 15.500H6.500z" fill="#fcbf1e" />
              <path d="M11.500 9.500v3M11.500 13.300v1.200" stroke="#222" strokeWidth="1.300" />
            </Svg>
            <Gap $w={7} />
            <Svg $w={17} viewBox="0 0 17 17">
              <path d="M.5 5.500h2L6.500 1.500V13.500L2.500 9.500h-2z" fill="none" stroke="#fff" strokeWidth="1.100" />
              <circle cx="11.500" cy="11.500" r="4.500" fill="#d9242f" />
              <path d="M9.800 9.800l3.400 3.400M13.200 9.800l-3.400 3.400" stroke="#fff" strokeWidth="1.200" />
            </Svg>
            <Ime>英</Ime>
            <Clock>
              21:44
              <br />
              2023/5/8
            </Clock>
            <Svg $w={16} $h={16} viewBox="0 0 16 16">
              <path d="M.5 .5h15v12h-5.500L8 15L6 12.500H.5z" fill="none" stroke="#fff" strokeWidth="1.100" />
            </Svg>
            <DesktopEdge />
          </Tray>
        </Taskbar>

        <Dialog $x={320} $y={166} $w={644} $h={424} $edge="#a5a5a5">
          <DialogTitle $dim>
            <Txt>网站绑定</Txt>
            <HelpMark>?</HelpMark>
            <CloseGlyph c="#888" />
          </DialogTitle>
          <BindingsBody>
            <BindingsList>
              <BindingsRow $head>
                <span>类型</span>
                <span>主机名</span>
                <span>端口</span>
                <span>IP 地址</span>
                <span>绑定信息</span>
              </BindingsRow>
              <BindingsRow>
                <span>http</span>
                <span />
                <span>80</span>
                <span>*</span>
                <span />
              </BindingsRow>
            </BindingsList>
            <ButtonStack>
              <Push>添加(A)...</Push>
              <Push>编辑(E)...</Push>
              <Push $state="off">删除(R)</Push>
              <Push>浏览(B)</Push>
              <Push>关闭(C)</Push>
            </ButtonStack>
          </BindingsBody>
        </Dialog>

        <Dialog $x={233} $y={292} $w={527} $h={470} $edge="#686868">
          <DialogTitle>
            <Txt>编辑网站绑定</Txt>
            <HelpMark>?</HelpMark>
            <CloseGlyph c="#000" />
          </DialogTitle>
          <EditBody>
            <FieldRow>
              <Field $w={116} $gap={9}>
                <FieldLabel>类型(T):</FieldLabel>
                <Box $h={25} $c="#bfbfbf" $off $low>
                  http
                  <Chevron w={9} c="#999" sw={1.1} />
                </Box>
              </Field>
              <Field $w={212} $gap={7}>
                <FieldLabel $pad={0}>IP 地址(I):</FieldLabel>
                <Box $h={25} $c="#7a7a7a">
                  192.168.10.1
                  <Chevron w={9} c="#444" sw={1.1} />
                </Box>
              </Field>
              <Field $w={58}>
                <FieldLabel $pad={0}>端口(O):</FieldLabel>
                <Box $h={23} $c="#7a7a7a">
                  80
                </Box>
              </Field>
            </FieldRow>
            <HostRow>
              <Field $w={302}>
                <FieldLabel $pad={3}>主机名(H):</FieldLabel>
                <HostBox $h={23} $c="#0078d7">
                  www.msftconnecttest.com
                </HostBox>
              </Field>
            </HostRow>
            <Example $ls={0.16}>示例: www.contoso.com 或 marketing.contoso.com</Example>
            <DialogActions>
              <Push $w={91} $state="default">
                确定
              </Push>
              <Push $w={97}>取消</Push>
            </DialogActions>
          </EditBody>
        </Dialog>

        <Note $x={1098} $y={203}>#1</Note>
        <Note $x={410} $y={246}>#2</Note>
        <Note $x={838} $y={251}>#3</Note>
        <Note $x={414} $y={393}>#4</Note>
      </Screen>
    </>
  );
}
